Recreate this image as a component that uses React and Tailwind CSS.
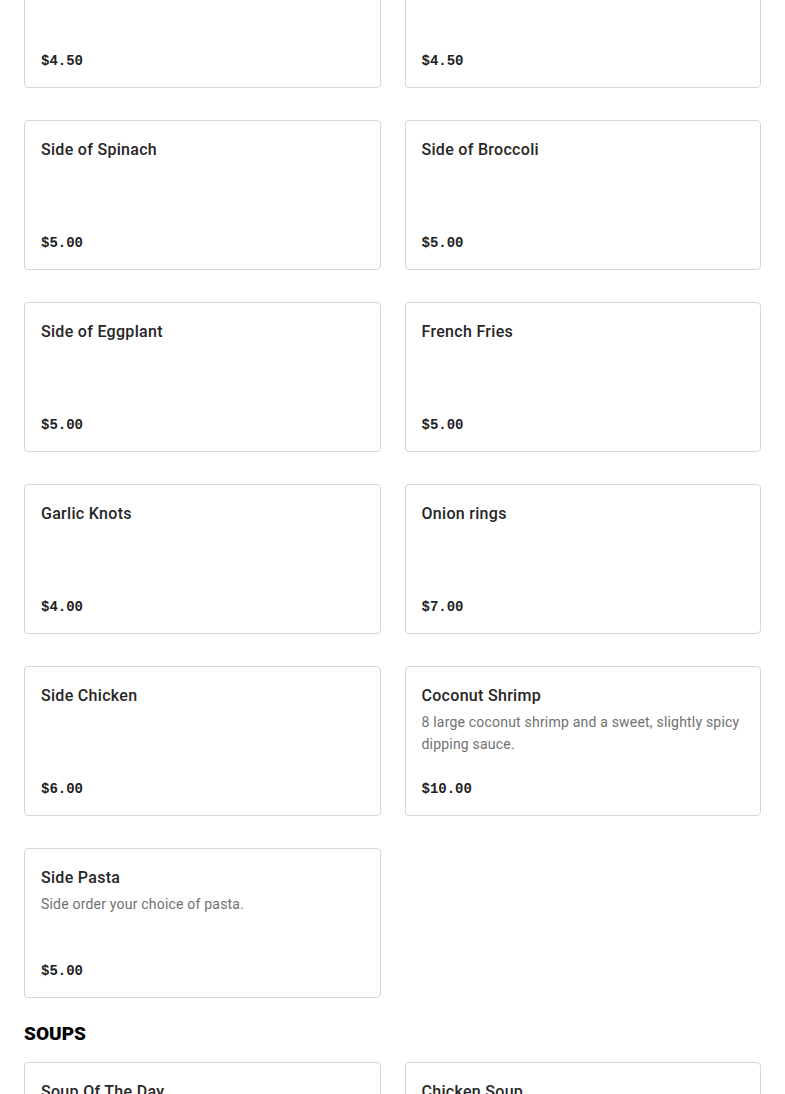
const sides = [
  { name: "Side of Rice", price: "$4.50" },
  { name: "Side of Beans", price: "$4.50" },
  { name: "Side of Spinach", price: "$5.00" },
  { name: "Side of Broccoli", price: "$5.00" },
  { name: "Side of Eggplant", price: "$5.00" },
  { name: "French Fries", price: "$5.00" },
  { name: "Garlic Knots", price: "$4.00" },
  { name: "Onion rings", price: "$7.00" },
  { name: "Side Chicken", price: "$6.00" },
  {
    name: "Coconut Shrimp",
    description: "8 large coconut shrimp and a sweet, slightly spicy dipping sauce.",
    price: "$10.00",
  },
  {
    name: "Side Pasta",
    description: "Side order your choice of pasta.",
    price: "$5.00",
  },
];

const soups = [
  { name: "Soup Of The Day", price: "$6.00" },
  { name: "Chicken Soup", price: "$6.00" },
];

function MenuCard({ item }) {
  return (
    <div className="flex h-[150px] flex-col rounded border border-[#d6d6d6] bg-white px-4 pt-[17px] pb-4">
      <h3 className="text-base leading-6 font-medium tracking-[0.3px] text-[#262626]">
        {item.name}
      </h3>
      {item.description && (
        <p className="mt-[3px] text-sm leading-[22px] tracking-[0.2px] text-[#717171]">
          {item.description}
        </p>
      )}
      <p className="mt-auto font-['Liberation_Mono',monospace] text-sm leading-5 font-bold text-[#222]">
        {item.price}
      </p>
    </div>
  );
}

export default function App() {
  return (
    <div className="h-[1094px] overflow-hidden bg-white font-['Roboto',sans-serif]">
      <div className="-mt-[62px] px-6">
        <section className="grid grid-cols-2 gap-x-6 gap-y-8">
          {sides.map((item) => (
            <MenuCard key={item.name} item={item} />
          ))}
        </section>

        <h2 className="mt-[22px] mb-[14px] text-[19px] leading-7 font-black text-black">
          SOUPS
        </h2>

        <section className="grid grid-cols-2 gap-x-6 gap-y-8">
          {soups.map((item) => (
            <MenuCard key={item.name} item={item} />
          ))}
        </section>
      </div>
    </div>
  );
}
